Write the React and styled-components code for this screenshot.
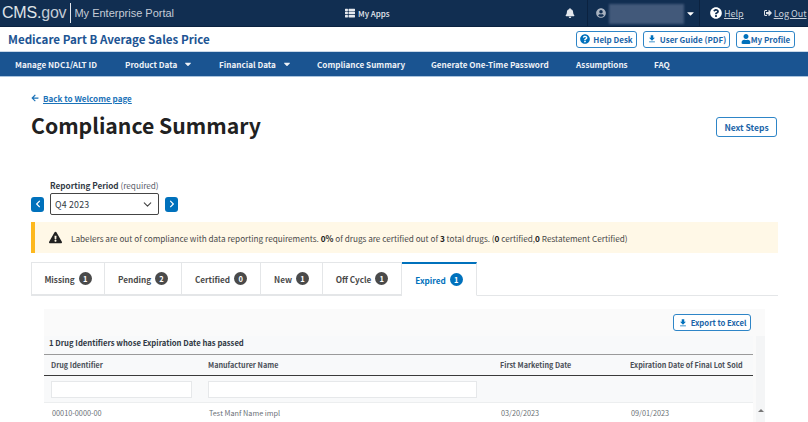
import React from 'react'
import styled, { createGlobalStyle } from 'styled-components'
import { ChevronDown } from 'lucide-react'
import {
  FaArrowLeft,
  FaBell,
  FaCaretDown,
  FaChevronLeft,
  FaChevronRight,
  FaExclamationTriangle,
  FaQuestionCircle,
  FaSignOutAlt,
  FaThList,
  FaUser,
  FaUserCircle,
} from 'react-icons/fa'
import { MdFileDownload } from 'react-icons/md'

const SANS = '"Noto Sans CJK SC", "Source Sans Pro", "Noto Sans", sans-serif'

const GlobalStyle = createGlobalStyle`
  html, body {
    margin: 0;
    height: 422px;
    overflow: hidden;
    background: #fff;
    font-family: ${SANS};
    color: #212121;
  }
  * { box-sizing: border-box; }
`

const TopBar = styled.header`
  height: 27px;
  background: #112e51;
  border-bottom: 1px solid #0b2240;
  display: flex;
  align-items: center;
  color: #e4e8ee;
  white-space: nowrap;
  > * { flex-shrink: 0; }
`

const Logo = styled.div`
  display: flex;
  align-items: center;
  width: 345px;
  padding-left: 2px;
  font-family: "Liberation Sans", sans-serif;
  height: 100%;
`

const LogoMark = styled.span`
  font-size: 16px;
  letter-spacing: -0.2px;
  color: #dfe3e8;
  small { font-size: 16px; font-weight: 400; color: #c3cbd5; }
`

const LogoRule = styled.span`
  width: 1px;
  height: 20px;
  background: #e4e8ee;
  margin: 0 3px 0 4px;
`

const LogoText = styled.span`
  font-size: 11px;
  color: #c5ccd6;
`

const MyApps = styled.div`
  display: flex;
  align-items: center;
  gap: 3px;
  font-size: 8px;
  font-weight: 500;
  width: 214px;
  svg { font-size: 10px; }
`

const BellCell = styled.div`
  width: 28px;
  padding-left: 6px;
  display: flex;
  font-size: 10px;
`

const UserCell = styled.div`
  width: 113px;
  height: 100%;
  display: flex;
  align-items: center;
  padding-left: 8px;
  border-left: 1px solid #0b2240;
  border-right: 1px solid #0b2240;
  position: relative;
  svg:first-child { font-size: 10px; color: #a9b3c0; }
  svg:last-child { position: absolute; left: 97px; font-size: 11px; color: #fff; }
`

const Redaction = styled.span`
  position: absolute;
  left: 21px;
  top: 4px;
  width: 75px;
  height: 20px;
  background: #42597a;
  filter: blur(1px);
`

const TopLink = styled.a`
  display: flex;
  align-items: center;
  gap: 2px;
  font-size: 9px;
  color: #c8d0da;
  text-decoration: underline;
  margin-left: ${(p) => p.$gap}px;
  svg { font-size: ${(p) => p.$icon}px; color: ${(p) => p.$iconColor}; }
`

const TitleBar = styled.div`
  height: 24px;
  display: flex;
  align-items: center;
  justify-content: space-between;
  padding: 0 13px 0 8px;
`

const AppTitle = styled.div`
  font-size: 11.6px;
  font-weight: 700;
  color: #205493;
`

const TitleActions = styled.div`
  display: flex;
  gap: 6px;
`

const OutlineButton = styled.button`
  height: ${(p) => p.$h || 17}px;
  width: ${(p) => p.$w}px;
  display: inline-flex;
  align-items: center;
  justify-content: center;
  gap: ${(p) => (p.$tight ? 0 : 3)}px;
  padding: 0;
  background: #fff;
  border: 1px solid #2e85c7;
  border-radius: 3px;
  color: #1a64a8;
  font-family: ${SANS};
  font-size: ${(p) => p.$size || 8}px;
  font-weight: 700;
  white-space: nowrap;
  svg { font-size: 10px; color: #0071bc; flex-shrink: 0; }
`

const NavBar = styled.nav`
  height: 26px;
  background: #1a5491;
  border-top: 1px solid #c9d8e8;
  border-bottom: 1px solid #a9c3dd;
  display: flex;
  align-items: center;
  padding-left: 15px;
`

const NavItem = styled.a`
  display: flex;
  align-items: center;
  gap: 6px;
  width: ${(p) => p.$w}px;
  font-size: 8.15px;
  font-weight: 700;
  color: #eef2f7;
  white-space: nowrap;
  svg { font-size: 10px; }
`

const Main = styled.main`
  padding: 13px 30px 0 31px;
`

const BackLink = styled.a`
  display: flex;
  align-items: center;
  gap: 4px;
  height: 16px;
  font-size: 8.1px;
  font-weight: 700;
  color: #1a72b8;
  span { text-decoration: underline; }
  svg { font-size: 8px; }
`

const PageHead = styled.div`
  display: flex;
  justify-content: space-between;
  align-items: flex-start;
  height: 72px;
`

const PageTitle = styled.h1`
  margin: 2px 0 0;
  font-size: 21.2px;
  line-height: 34px;
  font-weight: 700;
  color: #212121;
`

const NextSteps = styled(OutlineButton)`
  margin: 11px 1px 0 0;
`

const PeriodLabel = styled.div`
  margin-left: 19px;
  height: 15px;
  font-size: 8.2px;
  line-height: 14px;
  font-weight: 700;
  color: #323a45;
  span { font-weight: 400; color: #5b616b; }
`

const PeriodRow = styled.div`
  display: flex;
  align-items: center;
  height: 22px;
`

const StepButton = styled.button`
  width: 13px;
  height: 15px;
  padding: 0;
  display: flex;
  align-items: center;
  justify-content: center;
  background: #0071bc;
  border: 0;
  border-radius: 3px;
  color: #fff;
  svg { font-size: 8px; }
`

const Select = styled.div`
  width: 109px;
  height: 22px;
  margin: 0 6px;
  padding: 0 4px;
  display: flex;
  align-items: center;
  justify-content: space-between;
  border: 1px solid #444;
  border-radius: 2px;
  font-size: 8.8px;
  letter-spacing: 0.2px;
  color: #323a45;
  svg { width: 13px; height: 13px; color: #444; }
`

const Alert = styled.div`
  margin-top: 7px;
  height: 31px;
  display: flex;
  align-items: center;
  gap: 9px;
  padding-left: 14px;
  background: #fff8e7;
  border-left: 4px solid #fdb81e;
  font-size: 8.2px;
  color: #494949;
  svg { font-size: 13px; color: #212121; }
  b { font-weight: 700; color: #212121; }
`

const TabBar = styled.div`
  margin-top: 9px;
  display: flex;
  height: 34px;
  border-bottom: 1px solid #e4e6e8;
`

const Tab = styled.div`
  width: ${(p) => p.$w}px;
  height: ${(p) => (p.$active ? 34 : 33)}px;
  display: flex;
  align-items: center;
  justify-content: center;
  gap: 4px;
  font-size: 8.2px;
  font-weight: 700;
  background: #fff;
  color: ${(p) => (p.$active ? '#0071bc' : '#494949')};
  border: 1px solid #e4e6e8;
  border-left-width: ${(p) => (p.$first ? 1 : 0)}px;
  border-top: ${(p) => (p.$active ? '2px solid #0071bc' : '1px solid #e4e6e8')};
  border-bottom-color: ${(p) => (p.$active ? '#fff' : '#e4e6e8')};
`

const Count = styled.span`
  width: 13px;
  height: 13px;
  border-radius: 50%;
  display: flex;
  align-items: center;
  justify-content: center;
  font-size: 7.5px;
  color: #fff;
  background: ${(p) => (p.$active ? '#0071bc' : '#4a4a4a')};
`

const Panel = styled.section`
  margin: 13px 13px 0;
  background: #fafafa;
  position: relative;
  height: 114px;
`

const PanelTools = styled.div`
  height: 27px;
  padding: 5px 14px 0 0;
  display: flex;
  justify-content: flex-end;
`

const Grid = styled.div`
  width: 709px;
  background: #f8f9fa;
`

const Caption = styled.div`
  height: 19px;
  padding: 0 0 0 5px;
  font-size: 7.7px;
  line-height: 14px;
  font-weight: 700;
  color: #323a45;
  border-bottom: 1px solid #9a9a9a;
`

const Row = styled.div`
  display: grid;
  grid-template-columns: 157px 292px 130px 1fr;
  padding-left: 7px;
  align-items: center;
  white-space: nowrap;
`

const HeadRow = styled(Row)`
  height: 21px;
  border-bottom: 1px solid #3a3a3a;
  font-size: 7.2px;
  font-weight: 700;
  color: #4a4f57;
`

const FilterRow = styled(Row)`
  height: 27px;
  border-bottom: 1px solid #eceeef;
`

const FilterInput = styled.input`
  height: 17px;
  width: ${(p) => p.$w}px;
  background: #fff;
  border: 1px solid #e6e8ea;
  padding: 0;
`

const DataRow = styled(Row)`
  height: 20px;
  background: #fff;
  font-size: 7.3px;
  color: #6a6f76;
`

const DataCell = styled.span`
  padding-left: 1px;
`

const ScrollStrip = styled.div`
  position: absolute;
  right: 0;
  top: 27px;
  bottom: 0;
  width: 9px;
  background: #f4f5f6;
`

const ScrollArrow = styled.span`
  position: absolute;
  left: 2px;
  top: 73px;
  width: 0;
  height: 0;
  border-left: 3px solid transparent;
  border-right: 3px solid transparent;
  border-bottom: 3px solid #777;
`

const NAV = [
  { label: 'Manage NDC1/ALT ID', w: 110 },
  { label: 'Product Data', w: 94, caret: true },
  { label: 'Financial Data', w: 98, caret: true },
  { label: 'Compliance Summary', w: 114 },
  { label: 'Generate One-Time Password', w: 145 },
  { label: 'Assumptions', w: 78 },
  { label: 'FAQ', w: 40 },
]

const TABS = [
  { label: 'Missing', count: 1, w: 74 },
  { label: 'Pending', count: 2, w: 77 },
  { label: 'Certified', count: 0, w: 79 },
  { label: 'New', count: 1, w: 62 },
  { label: 'Off Cycle', count: 1, w: 79 },
  { label: 'Expired', count: 1, w: 75, active: true },
]

export default function App() {
  return (
    <>
      <GlobalStyle />
      <TopBar>
        <Logo>
          <LogoMark>CMS.<small>gov</small></LogoMark>
          <LogoRule />
          <LogoText>My Enterprise Portal</LogoText>
        </Logo>
        <MyApps><FaThList />My Apps</MyApps>
        <BellCell><FaBell /></BellCell>
        <UserCell>
          <FaUserCircle />
          <Redaction />
          <FaCaretDown />
        </UserCell>
        <TopLink $gap={10} $icon={12} $iconColor="#fff"><FaQuestionCircle />Help</TopLink>
        <TopLink $gap={20} $icon={8} $iconColor="#dfe3e8"><FaSignOutAlt />Log Out</TopLink>
      </TopBar>
      <TitleBar>
        <AppTitle>Medicare Part B Average Sales Price</AppTitle>
        <TitleActions>
          <OutlineButton $w={61}><FaQuestionCircle />Help Desk</OutlineButton>
          <OutlineButton $w={87}><MdFileDownload />User Guide (PDF)</OutlineButton>
          <OutlineButton $w={59} $tight><FaUser />My Profile</OutlineButton>
        </TitleActions>
      </TitleBar>
      <NavBar>
        {NAV.map((item) => (
          <NavItem key={item.label} $w={item.w}>
            {item.label}
            {item.caret && <FaCaretDown />}
          </NavItem>
        ))}
      </NavBar>
      <Main>
        <BackLink><FaArrowLeft /><span>Back to Welcome page</span></BackLink>
        <PageHead>
          <PageTitle>Compliance Summary</PageTitle>
          <NextSteps $w={61} $h={20} $size={8.5}>Next Steps</NextSteps>
        </PageHead>
        <PeriodLabel>Reporting Period <span>(required)</span></PeriodLabel>
        <PeriodRow>
          <StepButton><FaChevronLeft /></StepButton>
          <Select>Q4 2023<ChevronDown /></Select>
          <StepButton><FaChevronRight /></StepButton>
        </PeriodRow>
        <Alert>
          <FaExclamationTriangle />
          <span>
            Labelers are out of compliance with data reporting requirements. <b>0%</b> of drugs are certified out of <b>3</b> total drugs. (<b>0</b> certified,<b>0</b> Restatement Certified)
          </span>
        </Alert>
        <TabBar>
          {TABS.map((tab, i) => (
            <Tab key={tab.label} $w={tab.w} $active={tab.active} $first={i === 0}>
              {tab.label}
              <Count $active={tab.active}>{tab.count}</Count>
            </Tab>
          ))}
        </TabBar>
        <Panel>
          <PanelTools>
            <OutlineButton $w={78} $size={7.7}><MdFileDownload />Export to Excel</OutlineButton>
          </PanelTools>
          <Grid>
            <Caption>1 Drug Identifiers whose Expiration Date has passed</Caption>
            <HeadRow>
              <span>Drug Identifier</span>
              <span>Manufacturer Name</span>
              <span>First Marketing Date</span>
              <span>Expiration Date of Final Lot Sold</span>
            </HeadRow>
            <FilterRow>
              <FilterInput $w={141} />
              <FilterInput $w={269} />
            </FilterRow>
            <DataRow>
              <DataCell>00010-0000-00</DataCell>
              <DataCell>Test Manf Name impl</DataCell>
              <DataCell>03/20/2023</DataCell>
              <DataCell>09/01/2023</DataCell>
            </DataRow>
          </Grid>
          <ScrollStrip><ScrollArrow /></ScrollStrip>
        </Panel>
      </Main>
    </>
  )
}
